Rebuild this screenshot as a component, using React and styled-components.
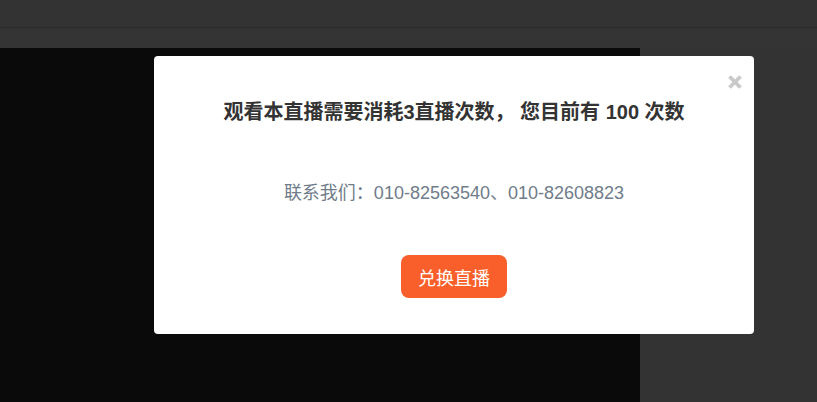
import styled, { createGlobalStyle } from 'styled-components';

const GlobalStyle = createGlobalStyle`
    html, body {
        margin: 0;
        padding: 0;
        background: #333333;
        font-family: "Liberation Sans", "Noto Sans CJK SC", sans-serif;
    }
`;

const Page = styled.div`
    position: relative;
    width: 817px;
    height: 402px;
    overflow: hidden;
    background: #333333;
    display: flex;
    flex-direction: column;
`;

const TopBar = styled.div`
    height: 27px;
    border-bottom: 1px solid #2a2a2a;
    background: #333333;
`;

const SubBar = styled.div`
    height: 20px;
    background: #343434;
`;

const Main = styled.div`
    flex: 1;
    display: flex;
`;

const Player = styled.div`
    width: 640px;
    background: #0a0a0a;
`;

const Side = styled.div`
    flex: 1;
    background: #333333;
`;

const Modal = styled.div`
    position: absolute;
    left: 154px;
    top: 56px;
    width: 600px;
    height: 278px;
    box-sizing: border-box;
    background: #ffffff;
    border-radius: 4px;
    display: flex;
    flex-direction: column;
    align-items: center;
    padding-top: 42px;
`;

const Close = styled.button`
    position: absolute;
    right: 11px;
    top: 18px;
    width: 16px;
    height: 16px;
    padding: 0;
    border: 0;
    background: none;
    cursor: pointer;
    display: flex;
`;

const Title = styled.h3`
    margin: 0;
    font-size: 20px;
    line-height: 28px;
    font-weight: bold;
    color: #333333;
    white-space: pre;
`;

const Contact = styled.p`
    margin: 55px 0 0;
    font-size: 18px;
    line-height: 24px;
    color: #707c8a;
`;

const Button = styled.button`
    margin-top: 50px;
    height: 43px;
    padding: 0 17px;
    border: 0;
    border-radius: 8px;
    background: #f95f2b;
    color: #ffffff;
    font-family: inherit;
    font-size: 18px;
    cursor: pointer;
`;

const App = () => (
    <>
        <GlobalStyle />
        <Page>
            <TopBar />
            <SubBar />
            <Main>
                <Player />
                <Side />
            </Main>
            <Modal>
                <Close aria-label="关闭">
                    <svg width="16" height="16" viewBox="0 0 16 16">
                        <path d="M2.5 2.5 L13.5 13.5 M13.5 2.5 L2.5 13.5" stroke="#c9c9c9" strokeWidth="3.8" strokeLinecap="butt" />
                    </svg>
                </Close>
                <Title>{'观看本直播需要消耗3直播次数， 您目前有 100 次数'}</Title>
                <Contact>联系我们：010-82563540、010-82608823</Contact>
                <Button>兑换直播</Button>
            </Modal>
        </Page>
    </>
);

export default App;
